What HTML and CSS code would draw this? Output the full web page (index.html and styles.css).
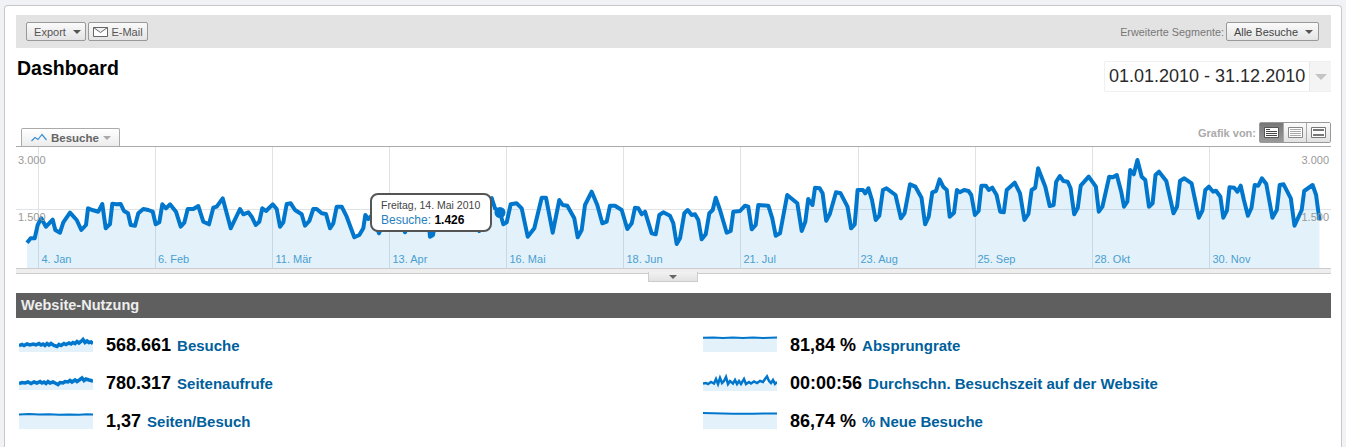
FILE: index.html
```html
<!DOCTYPE html>
<html lang="de">
<head>
  <meta charset="UTF-8">
  <title>Dashboard</title>
  <link rel="stylesheet" href="styles.css">
</head>
<body>
  <div class="card">

    <div class="toolbar">
      <div class="toolbar-left">
        <button class="btn btn-export">Export <span class="caret"></span></button>
        <button class="btn btn-mail">
          <svg class="mail-icon" width="15" height="10" viewBox="0 0 15 10"><path d="M.5 .5h14v9H.5zM.5 .5l7 5 7-5" fill="#fff" stroke="#666"/></svg>
          E-Mail
        </button>
      </div>
      <div class="toolbar-right">
        <span class="segment-label">Erweiterte Segmente:</span>
        <button class="btn btn-segment">Alle Besuche <span class="caret"></span></button>
      </div>
    </div>

    <div class="title-row">
      <h1>Dashboard</h1>
      <div class="date-box">
        <span class="date-text">01.01.2010 - 31.12.2010</span>
        <span class="date-arrow"><span class="caret caret-big"></span></span>
      </div>
    </div>

    <div class="chart-head">
      <div class="tab">
        <svg width="16" height="9" viewBox="0 0 16 9"><path d="M.5 8 4 4.500 7 6.500 11 1.500 15.500 7" fill="none" stroke="#3a8fd0" stroke-width="1.200"/></svg>
        <span>Besuche</span>
        <span class="caret caret-light"></span>
      </div>
      <div class="view-switch">
        <span class="view-label">Grafik von:</span>
        <div class="view-group">
          <span class="view-btn view-btn-on">
            <svg width="15" height="11" viewBox="0 0 15 11"><path d="M.5 .5h14v10H.5z" fill="#fff" stroke="#555"/><path d="M2 2.500h4M2 4.500h11M2 6.500h11M2 8.500h11" stroke="#444"/></svg>
          </span>
          <span class="view-btn">
            <svg width="15" height="11" viewBox="0 0 15 11"><path d="M.5 .5h14v10H.5z" fill="#fff" stroke="#888"/><path d="M2 2.500h11M2 4.500h11M2 6.500h11M2 8.500h11" stroke="#aaa"/></svg>
          </span>
          <span class="view-btn">
            <svg width="15" height="11" viewBox="0 0 15 11"><path d="M.5 .5h14v10H.5z" fill="#fff" stroke="#777"/><path d="M2 3h11M2 8h11" stroke="#777" stroke-width="2"/></svg>
          </span>
        </div>
      </div>
    </div>

    <div class="chart">
      <svg class="chart-svg" width="1315" height="125" viewBox="16 147 1315 125">
        <path class="grid-line" d="M38.500 147V268M155.500 147V268M272.500 147V268M389.500 147V268M506.500 147V268M623.500 147V268M740.500 147V268M858.500 147V268M975.500 147V268M1092.500 147V268M1209.500 147V268M16 209.500H1331"/>
        <polygon class="area" points="27,268 27,242.700 30.700,238.300 34.700,238.300 37.700,225 41.300,218.300 46,226.700 52.700,219.700 55.300,230 60,232.700 63.300,222.300 70,212.700 76.700,220 81.300,230 86,225 88,208.300 93.300,210.300 98.300,211.700 102.300,204 105.700,228.300 110,224 112.300,203.700 116.700,204.300 120.700,204 124,211 128,213.300 130.700,225 135,225.700 138.300,213.300 143.300,209 148.300,210 152.700,211.700 155.700,224.300 159.300,222.300 162.300,204.300 166,208.300 170,204.300 176,211.700 180.700,226.700 184.300,222.700 187.700,209 193.300,209 198.300,206 203.300,221.700 209,224.300 213.300,207.700 216.700,206.700 222.700,198.300 226.700,213.300 230.700,228.300 240,209 243.300,214.300 248.300,212.300 251.700,216.700 255.700,225 259.300,221.700 262.300,208.300 266,211 272.700,204.300 276.700,209 280,226.700 283.300,222.300 286.700,204 290.700,203.300 295,210 301.700,214.300 305,225.700 309.300,221 313.300,209 316.700,209 321.700,213.300 326,214 330,228.300 333.300,223.300 336.700,206.700 341.700,206.700 346.700,216.700 354.300,237.300 359.300,235 363.300,228.300 365.300,215 368.300,219 372,215 379,233.300 385,220 392,205 398,205 405,232.300 412,210 420,205 428,215 430,236.700 433,235 438,208 450,205 460,210 470,212 479.300,231 484,222 489,200 491.700,198 495,208.300 500,212.700 503.300,224.300 506.700,222.300 510.700,204.300 516.700,203.300 521.700,208.300 527.700,236.700 534.300,228.300 541.700,197.700 546,197.700 552.700,232.700 559.300,200 562.700,205 567.300,205.700 574.300,218.300 577.700,237.300 581.700,230 585,205 591.700,191.700 597.300,205 602.300,223.300 606.700,221.700 610,205.700 615,205.700 621.700,210 627.300,229 631.700,223.300 635,207.700 638.300,208.300 641.700,214.300 645,211.700 651.700,233.300 655.700,234.300 659.300,215 663.300,212.300 670,215.700 673.300,223.300 676.700,244 680,238.300 684.300,213.300 687.700,210 691.700,215 695,214.300 698.300,220 701.700,239.300 705.700,234.300 709.300,213.300 712.700,210 715.700,197.700 720,210 726.700,232.700 730.700,231 733.300,211.700 740,211 745,205.700 748.300,206.700 751.700,229.300 755.700,225 758.300,205 768.300,205.700 772.300,218.300 775.700,235.700 780,233.300 787.200,195 797.300,203.300 801.700,231 805.300,221.700 808.200,199 812.500,205 815,187.700 819.700,188.300 822.600,193.300 826.200,220.700 829.800,214 836,192.300 840.600,193.300 847.500,206.700 851.100,228.300 854.700,224.300 857.600,190 863,190 865.200,193.300 868.400,188.300 872,200 875.700,220 879.300,215.700 882.900,190 886.500,188.300 895.500,195 900.900,218.300 904.500,213.300 910,184.300 915.400,186.700 921.500,197.700 925.100,224.300 928.700,216.700 932.300,192.300 936,191 939.600,179.300 943.200,186.700 946.800,190 949.700,216.700 954,212.700 956.900,190 959.800,192.300 964.100,190 968.500,191 971.300,195 974.900,215 978.600,211 981.400,185.700 985.800,185.700 988.700,190 992.300,187.700 996.600,195 1000.200,211.700 1003.800,212.300 1006.700,190 1014.700,182.700 1020,193.300 1024.400,220 1028.400,214 1031.600,190 1035.200,187.700 1038.100,168.300 1045.300,186.700 1049.700,206 1053.600,205 1056.200,181.700 1059.800,176 1063.400,181 1067.700,181.700 1070.600,188.300 1074.200,214.300 1077.800,207.700 1080.700,185.700 1088.700,176.700 1095.900,186.700 1098.800,211.700 1102.400,206.700 1109.200,176.700 1112.900,177.300 1116.800,175 1121.200,191.700 1124,206.700 1127.300,201.700 1130.200,170 1133.800,174.300 1137.400,160 1141.700,176.700 1145.300,180 1149,206.700 1152.600,203.300 1155.500,175 1159,171.700 1166.300,181 1173.500,213.300 1177,206.700 1180,181 1184.300,178.300 1191.600,183.300 1198.800,217.700 1202.400,210.700 1205.300,190 1208.900,186.700 1213.200,191.700 1216,190.700 1220.400,196.700 1223.300,217.700 1226.900,210.700 1229.500,187.300 1234.200,187.700 1237.400,191.700 1240.700,185.700 1243.900,200 1247.900,215.700 1251.500,207.700 1254.700,185 1258.300,185.700 1261.900,178.300 1266.300,184 1272.400,217.700 1276.800,210 1279.700,185 1283.600,184.300 1290.800,198.300 1294.500,225.700 1301.700,210 1304.200,191 1312.600,185 1316.100,195 1319.400,220 1319.400,268"/>
        <polyline class="line" points="27,242.700 30.700,238.300 34.700,238.300 37.700,225 41.300,218.300 46,226.700 52.700,219.700 55.300,230 60,232.700 63.300,222.300 70,212.700 76.700,220 81.300,230 86,225 88,208.300 93.300,210.300 98.300,211.700 102.300,204 105.700,228.300 110,224 112.300,203.700 116.700,204.300 120.700,204 124,211 128,213.300 130.700,225 135,225.700 138.300,213.300 143.300,209 148.300,210 152.700,211.700 155.700,224.300 159.300,222.300 162.300,204.300 166,208.300 170,204.300 176,211.700 180.700,226.700 184.300,222.700 187.700,209 193.300,209 198.300,206 203.300,221.700 209,224.300 213.300,207.700 216.700,206.700 222.700,198.300 226.700,213.300 230.700,228.300 240,209 243.300,214.300 248.300,212.300 251.700,216.700 255.700,225 259.300,221.700 262.300,208.300 266,211 272.700,204.300 276.700,209 280,226.700 283.300,222.300 286.700,204 290.700,203.300 295,210 301.700,214.300 305,225.700 309.300,221 313.300,209 316.700,209 321.700,213.300 326,214 330,228.300 333.300,223.300 336.700,206.700 341.700,206.700 346.700,216.700 354.300,237.300 359.300,235 363.300,228.300 365.300,215 368.300,219 372,215 379,233.300 385,220 392,205 398,205 405,232.300 412,210 420,205 428,215 430,236.700 433,235 438,208 450,205 460,210 470,212 479.300,231 484,222 489,200 491.700,198 495,208.300 500,212.700 503.300,224.300 506.700,222.300 510.700,204.300 516.700,203.300 521.700,208.300 527.700,236.700 534.300,228.300 541.700,197.700 546,197.700 552.700,232.700 559.300,200 562.700,205 567.300,205.700 574.300,218.300 577.700,237.300 581.700,230 585,205 591.700,191.700 597.300,205 602.300,223.300 606.700,221.700 610,205.700 615,205.700 621.700,210 627.300,229 631.700,223.300 635,207.700 638.300,208.300 641.700,214.300 645,211.700 651.700,233.300 655.700,234.300 659.300,215 663.300,212.300 670,215.700 673.300,223.300 676.700,244 680,238.300 684.300,213.300 687.700,210 691.700,215 695,214.300 698.300,220 701.700,239.300 705.700,234.300 709.300,213.300 712.700,210 715.700,197.700 720,210 726.700,232.700 730.700,231 733.300,211.700 740,211 745,205.700 748.300,206.700 751.700,229.300 755.700,225 758.300,205 768.300,205.700 772.300,218.300 775.700,235.700 780,233.300 787.200,195 797.300,203.300 801.700,231 805.300,221.700 808.200,199 812.500,205 815,187.700 819.700,188.300 822.600,193.300 826.200,220.700 829.800,214 836,192.300 840.600,193.300 847.500,206.700 851.100,228.300 854.700,224.300 857.600,190 863,190 865.200,193.300 868.400,188.300 872,200 875.700,220 879.300,215.700 882.900,190 886.500,188.300 895.500,195 900.900,218.300 904.500,213.300 910,184.300 915.400,186.700 921.500,197.700 925.100,224.300 928.700,216.700 932.300,192.300 936,191 939.600,179.300 943.200,186.700 946.800,190 949.700,216.700 954,212.700 956.900,190 959.800,192.300 964.100,190 968.500,191 971.300,195 974.900,215 978.600,211 981.400,185.700 985.800,185.700 988.700,190 992.300,187.700 996.600,195 1000.200,211.700 1003.800,212.300 1006.700,190 1014.700,182.700 1020,193.300 1024.400,220 1028.400,214 1031.600,190 1035.200,187.700 1038.100,168.300 1045.300,186.700 1049.700,206 1053.600,205 1056.200,181.700 1059.800,176 1063.400,181 1067.700,181.700 1070.600,188.300 1074.200,214.300 1077.800,207.700 1080.700,185.700 1088.700,176.700 1095.900,186.700 1098.800,211.700 1102.400,206.700 1109.200,176.700 1112.900,177.300 1116.800,175 1121.200,191.700 1124,206.700 1127.300,201.700 1130.200,170 1133.800,174.300 1137.400,160 1141.700,176.700 1145.300,180 1149,206.700 1152.600,203.300 1155.500,175 1159,171.700 1166.300,181 1173.500,213.300 1177,206.700 1180,181 1184.300,178.300 1191.600,183.300 1198.800,217.700 1202.400,210.700 1205.300,190 1208.900,186.700 1213.200,191.700 1216,190.700 1220.400,196.700 1223.300,217.700 1226.900,210.700 1229.500,187.300 1234.200,187.700 1237.400,191.700 1240.700,185.700 1243.900,200 1247.900,215.700 1251.500,207.700 1254.700,185 1258.300,185.700 1261.900,178.300 1266.300,184 1272.400,217.700 1276.800,210 1279.700,185 1283.600,184.300 1290.800,198.300 1294.500,225.700 1301.700,210 1304.200,191 1312.600,185 1316.100,195 1319.400,220"/>
        <circle class="dot" cx="500" cy="212.500" r="5.500"/>
        <text class="axis-y" x="18" y="164">3.000</text>
        <text class="axis-y" x="18" y="221">1.500</text>
        <text class="axis-y axis-y-right" x="1329" y="164">3.000</text>
        <text class="axis-y axis-y-right" x="1329" y="221">1.500</text>
        <text class="axis-x" x="41.500" y="263">4. Jan</text>
        <text class="axis-x" x="158" y="263">6. Feb</text>
        <text class="axis-x" x="275.500" y="263">11. Mär</text>
        <text class="axis-x" x="392.500" y="263">13. Apr</text>
        <text class="axis-x" x="509.500" y="263">16. Mai</text>
        <text class="axis-x" x="626.500" y="263">18. Jun</text>
        <text class="axis-x" x="743.500" y="263">21. Jul</text>
        <text class="axis-x" x="860.500" y="263">23. Aug</text>
        <text class="axis-x" x="977.500" y="263">25. Sep</text>
        <text class="axis-x" x="1094.500" y="263">28. Okt</text>
        <text class="axis-x" x="1212.500" y="263">30. Nov</text>
      </svg>
      <div class="tooltip">
        <div class="tooltip-date">Freitag, 14. Mai 2010</div>
        <div class="tooltip-value">Besuche: <b>1.426</b></div>
      </div>
    </div>
    <div class="chart-foot">
      <div class="chart-handle"><span class="caret caret-small"></span></div>
    </div>

    <div class="section-head">Website-Nutzung</div>

    <div class="metrics">
      <div class="metric">
        <svg class="spark" width="74" height="20" viewBox="0 0 74 20"><polygon class="spark-area" points="0,10 74,8 74,17 0,17"/><polyline class="spark-line" points="0,10.500 3,9.500 5,10.500 8,9 11,10 14,9 17,9.800 20,8.500 22,10 24,9 26,10.500 28,8.500 30,10 32,8.500 35,10.500 38,11.500 40,9.500 42,10.500 45,8.500 47,9.500 50,8 52,9 54,7.500 56,8.500 58,6.500 60,8 62,6.500 64,4.500 66,7.500 68,6 70,7.500 72,7 74,8.500"/></svg>
        <span class="value">568.661</span> <a class="label">Besuche</a>
      </div>
      <div class="metric">
        <svg class="spark" width="74" height="20" viewBox="0 0 74 20"><polygon class="spark-area" points="0,2.500 74,2.500 74,17 0,17"/><polyline class="spark-line spark-thin" points="0,2.700 10,2.500 20,3 30,2.600 40,3 50,2.600 60,2.900 74,2.600"/></svg>
        <span class="value">81,84 %</span> <a class="label">Absprungrate</a>
      </div>
      <div class="metric">
        <svg class="spark" width="74" height="20" viewBox="0 0 74 20"><polygon class="spark-area" points="0,10 74,8 74,17 0,17"/><polyline class="spark-line" points="0,10.500 3,9.500 6,10 9,9 12,10.500 15,9 18,10 21,8.500 23,10 25,9 27,10.500 29,8.500 31,10 34,9 37,10.500 39,11.500 41,9.500 44,10 46,8.500 49,9 51,7.500 53,9 56,7 58,8.500 61,6.500 63,5 65,7.500 67,6 70,7 72,7.500 74,8.500"/></svg>
        <span class="value">780.317</span> <a class="label">Seitenaufrufe</a>
      </div>
      <div class="metric">
        <svg class="spark" width="74" height="20" viewBox="0 0 74 20"><polygon class="spark-area" points="0,10 74,10 74,18 0,18"/><polyline class="spark-line spark-noisy" points="0,10.500 3,10 5,11 8,9 11,10.500 13,6 15,11 17,5 19,10 21,8 23,4 25,11 27,8 30,10.500 32,7 34,11 36,8 38,11 41,6 43,11 46,9 48,10.500 51,8.500 54,10 57,8 60,9 62,6 64,3.500 66,8 68,10 70,7 72,11 74,9"/></svg>
        <span class="value">00:00:56</span> <a class="label">Durchschn. Besuchszeit auf der Website</a>
      </div>
      <div class="metric">
        <svg class="spark" width="74" height="20" viewBox="0 0 74 20"><polygon class="spark-area" points="0,3.500 74,3.500 74,18 0,18"/><polyline class="spark-line spark-thin" points="0,3.500 10,3 20,3.600 30,3.300 40,3.800 50,3.400 60,3.700 68,3.200 74,3.400"/></svg>
        <span class="value">1,37</span> <a class="label">Seiten/Besuch</a>
      </div>
      <div class="metric">
        <svg class="spark" width="74" height="20" viewBox="0 0 74 20"><polygon class="spark-area" points="0,2 74,2 74,18 0,18"/><polyline class="spark-line spark-thin" points="0,2 10,2.300 20,2.600 30,2.800 40,2.700 50,2.800 60,2.600 74,2.500"/></svg>
        <span class="value">86,74 %</span> <a class="label">% Neue Besuche</a>
      </div>
    </div>

  </div>
</body>
</html>
```

FILE: styles.css
```css
html, body {
  margin: 0;
  height: 447px;
  overflow: hidden;
}

body {
  background: #f1f2f6;
  font-family: "Liberation Sans", Arial, sans-serif;
  padding-top: 5px;
  box-sizing: border-box;
}

.card {
  margin: 0 4px;
  height: 442px;
  box-sizing: border-box;
  background: white;
  border: 1px solid #c8c8cc;
  border-bottom: none;
  border-radius: 4px 4px 0 0;
  padding: 9px 10px 0 11px;
}

.caret {
  display: inline-block;
  width: 0;
  height: 0;
  border-left: 4px solid transparent;
  border-right: 4px solid transparent;
  border-top: 4px solid #555;
  vertical-align: middle;
}

.caret-big {
  border-left-width: 6px;
  border-right-width: 6px;
  border-top: 6px solid #c4c4c4;
}

.caret-light {
  border-top-color: #aaa;
}

.caret-small {
  border-top-color: #666;
}

/* top bar */
.toolbar {
  display: flex;
  justify-content: space-between;
  align-items: center;
  height: 33px;
  background: #e3e3e3;
  padding: 0 12px 0 10px;
}

.toolbar-left,
.toolbar-right {
  display: flex;
  align-items: center;
  gap: 2px;
}

.btn {
  display: flex;
  align-items: center;
  justify-content: center;
  height: 19px;
  padding: 0;
  font-family: inherit;
  font-size: 11px;
  color: #555;
  background: linear-gradient(#fafafa, #e4e4e4);
  border: 1px solid #999;
  border-radius: 2px;
}

.btn-export {
  width: 60px;
  gap: 7px;
  padding-left: 3px;
}

.btn-mail {
  width: 60px;
  gap: 3px;
}

.btn-segment {
  width: 93px;
  gap: 7px;
  padding-left: 2px;
  color: #444;
}

.segment-label {
  font-size: 10.800px;
  color: #777;
}

/* title and date */
.title-row {
  display: flex;
  justify-content: space-between;
  align-items: flex-start;
  height: 74px;
  padding-top: 13px;
  box-sizing: border-box;
}

h1 {
  margin: 0 0 0 1px;
  font-size: 19.500px;
  line-height: 14px;
  color: black;
}

.date-box {
  display: flex;
  width: 227px;
  height: 31px;
  box-sizing: border-box;
  border: 1px solid #f0f0f0;
  border-right: none;
  border-radius: 2px 0 0 2px;
}

.date-text {
  flex: 1;
  font-size: 18px;
  line-height: 28px;
  color: #2a2a2a;
  padding-left: 4px;
}

.date-arrow {
  display: flex;
  align-items: center;
  justify-content: center;
  width: 21px;
  background: #f4f4f4;
  border-left: 1px solid #e8e8e8;
}

/* chart header */
.chart-head {
  display: flex;
  justify-content: space-between;
  align-items: flex-end;
  height: 24px;
  padding-left: 5px;
}

.tab {
  display: flex;
  align-items: center;
  gap: 4px;
  width: 99px;
  height: 18px;
  box-sizing: border-box;
  padding-left: 9px;
  font-size: 11.500px;
  font-weight: bold;
  color: #666;
  background: linear-gradient(#fff, #ececec);
  border: 1px solid #aaa;
  border-bottom: none;
  border-radius: 2px 2px 0 0;
}

.view-switch {
  display: flex;
  align-items: center;
  gap: 3px;
  align-self: flex-start;
}

.view-label {
  font-size: 11px;
  font-weight: bold;
  color: #aaa;
}

.view-group {
  display: flex;
  width: 72px;
  height: 21px;
  box-sizing: border-box;
  border: 1px solid #999;
  border-radius: 2px;
}

.view-btn {
  flex: 1;
  display: flex;
  align-items: center;
  justify-content: center;
  background: linear-gradient(#fbfbfb, #e2e2e2);
  border-left: 1px solid #aaa;
}

.view-btn-on {
  background: linear-gradient(#777, #999);
  border-left: none;
}

/* chart */
.chart {
  position: relative;
  height: 121px;
  border-top: 1px solid #aaa;
}

.chart-svg {
  display: block;
  position: absolute;
  top: 0;
  left: 0;
}

.grid-line {
  stroke: #e0e3e6;
  stroke-width: 1;
  fill: none;
}

.area {
  fill: #2a8fd6;
  fill-opacity: 0.13;
}

.line {
  fill: none;
  stroke: #0077cc;
  stroke-width: 4;
  stroke-linejoin: round;
}

.dot {
  fill: #0077cc;
}

.axis-y {
  font-size: 11px;
  fill: #999;
}

.axis-y-right {
  text-anchor: end;
}

.axis-x {
  font-size: 11px;
  fill: #4a9fd0;
}

.tooltip {
  position: absolute;
  left: 354px;
  top: 46px;
  width: 122px;
  height: 39px;
  box-sizing: border-box;
  padding: 4px 0 0 9px;
  background: white;
  border: 2px solid #555;
  border-radius: 8px;
}

.tooltip-date {
  font-size: 10.500px;
  line-height: 13px;
  color: #444;
}

.tooltip-value {
  font-size: 12px;
  line-height: 16px;
  color: #2a7fc0;
}

.tooltip-value b {
  color: black;
}

.chart-foot {
  position: relative;
  height: 4px;
  background: #eee;
  border-top: 1px solid #ccc;
  border-bottom: 1px solid #ccc;
  margin-bottom: 19px;
}

.chart-handle {
  position: absolute;
  left: 632px;
  top: 3px;
  display: flex;
  align-items: center;
  justify-content: center;
  width: 48px;
  height: 9px;
  background: linear-gradient(#f2f2f2, #e2e2e2);
  border: 1px solid #ccc;
  border-top: none;
}

/* website usage */
.section-head {
  height: 25px;
  padding-left: 5px;
  font-size: 14.500px;
  font-weight: bold;
  line-height: 25px;
  color: #eee;
  background: #5f5f5f;
}

.metrics {
  display: grid;
  grid-template-columns: 684px 1fr;
  grid-auto-rows: 38px;
  padding: 8px 0 0 3px;
}

.metric {
  display: flex;
  align-items: center;
  gap: 6px;
}

.spark {
  flex: none;
  margin-right: 7px;
}

.spark-area {
  fill: #2a8fd6;
  fill-opacity: 0.13;
}

.spark-line {
  fill: none;
  stroke: #0077cc;
  stroke-width: 3.500;
}

.spark-thin {
  stroke-width: 2;
}

.spark-noisy {
  stroke-width: 2.500;
}

.value {
  font-size: 18px;
  font-weight: bold;
  color: black;
}

.label {
  font-size: 15px;
  font-weight: bold;
  color: #00609c;
}
```
